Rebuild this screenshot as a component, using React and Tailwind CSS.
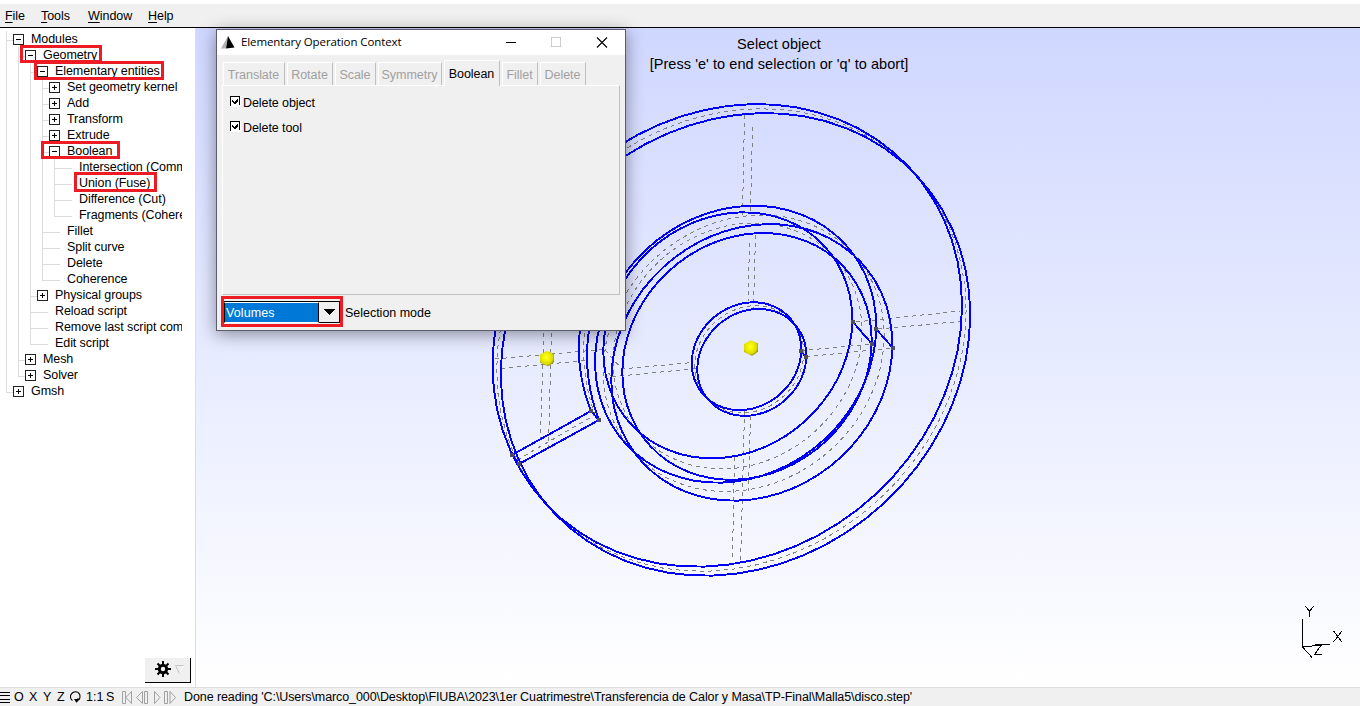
import React from "react";

const ROWS = [
  { t: "Modules", k: 0, s: "-" },
  { t: "Geometry", k: 1, s: "-" },
  { t: "Elementary entities", k: 2, s: "-" },
  { t: "Set geometry kernel", k: 3, s: "+" },
  { t: "Add", k: 3, s: "+" },
  { t: "Transform", k: 3, s: "+" },
  { t: "Extrude", k: 3, s: "+" },
  { t: "Boolean", k: 3, s: "-" },
  { t: "Intersection (Common)", k: 4 },
  { t: "Union (Fuse)", k: 4 },
  { t: "Difference (Cut)", k: 4 },
  { t: "Fragments (Coherence)", k: 4, last: true },
  { t: "Fillet", k: 3 },
  { t: "Split curve", k: 3 },
  { t: "Delete", k: 3 },
  { t: "Coherence", k: 3, last: true },
  { t: "Physical groups", k: 2, s: "+" },
  { t: "Reload script", k: 2 },
  { t: "Remove last script command", k: 2 },
  { t: "Edit script", k: 2, last: true },
  { t: "Mesh", k: 1, s: "+" },
  { t: "Solver", k: 1, s: "+", last: true },
  { t: "Gmsh", k: 0, s: "+", last: true },
];

function TreeRow({ row }) {
  return (
    <div className="flex h-4 shrink-0">
      {Array.from({ length: row.k }, (_, i) => (
        <div key={i} className="w-3 shrink-0 pl-[6px]">
          <div className="h-4 border-l border-[#dcdcdc]" />
        </div>
      ))}
      <div className="shrink-0 pl-[6px]">
        <div
          className={
            (row.s ? "w-[7px]" : "w-[18px]") + " h-[10px] border-b border-l border-[#dcdcdc]"
          }
        />
        {!row.last && <div className="h-[6px] border-l border-[#dcdcdc]" />}
      </div>
      {row.s && (
        <svg className="mt-[3px] h-[11px] w-[11px] shrink-0" viewBox="0 0 11 11" shapeRendering="crispEdges">
          <rect x="0.5" y="0.5" width="10" height="10" fill="#fff" stroke="#222" />
          <path d={row.s === "+" ? "M3 5.5H8M5.5 3V8" : "M3 5.5H8"} stroke="#000" fill="none" />
        </svg>
      )}
      <span className="ml-[7px] whitespace-nowrap text-[12.5px] leading-4 tracking-[-0.08px]">{row.t}</span>
    </div>
  );
}

const MARK = "absolute border-[3px] border-[#ed1c24]";

function ring(cx, cy, a, b) {
  const rho = -0.129;
  const q = Math.sqrt(1 - rho * rho);
  let d = "";
  const n = 64;
  for (let i = 0; i < n; i++) {
    const t = (2 * Math.PI * i) / n;
    const x = cx + a * Math.cos(t);
    const y = cy + b * (rho * Math.cos(t) + q * Math.sin(t));
    d += (i ? "L" : "M") + x.toFixed(1) + " " + y.toFixed(1);
  }
  return d + "Z";
}

const SOLID = [
  [727.3, 335.4, 234.7, 231.3],
  [735.5, 344.4, 234.7, 231.3],
  [727.8, 335.3, 124.5, 123],
  [747, 356.4, 124.7, 123.4],
  [735.6, 344.2, 140.6, 138.5],
  [751.8, 362.4, 140.5, 138.3],
  [746.5, 356.2, 54.8, 53.9],
  [751.8, 362.4, 54.5, 53.4],
];
const DASHED = [
  [731.4, 340, 234.7, 231.3],
  [737.5, 346, 124.5, 123],
  [743.7, 353.3, 140.5, 138.3],
  [749.2, 359.3, 54.6, 53.6],
];
const AXES =
  "M744.5 115L742.5 215M752.5 127L750.5 211M755.5 235L753.5 310M749.5 243L748 302" +
  "M856 322L960 311M878 329L965 321M801 350.7L872 344M806 356.7L893 348" +
  "M744.5 411L742.5 490M750.5 416L748.5 491M734.5 457L732.5 557M742.5 492L740.5 564" +
  "M495 359L602 349.5M501 368.5L585 360.5M621 369L693 362.5M612 376.7L697 368.5" +
  "M544 325L540.5 438M551.5 325L548.5 447M517 460L595 415M605 350L621.5 368.5M603 367L612 377" +
  "M585 325Q580 375 595 415";
const NODES = [
  [591, 411], [599, 420], [512, 455], [519, 464], [853, 322],
  [872, 344], [876, 329], [893, 348], [801, 351], [806, 357],
];

function Sphere({ x, y }) {
  return (
    <path
      transform={`translate(${x} ${y})`}
      d="M-1 -7.5L3 -6.5L7 -4.5L7 3.5L4 6L1 7.8L-3 6L-7 4L-7 -4L-4 -5.5Z"
      fill="url(#ball)"
    />
  );
}

function Scene() {
  return (
    <svg className="block h-[659px] w-[1164px]" viewBox="196 28 1164 659">
      <defs>
        <radialGradient id="ball" cx="0.45" cy="0.4" r="0.62">
          <stop offset="0" stopColor="#ffff30" />
          <stop offset="0.35" stopColor="#f4f400" />
          <stop offset="0.75" stopColor="#d8d800" />
          <stop offset="1" stopColor="#858500" />
        </radialGradient>
      </defs>
      <g fill="none" shapeRendering="crispEdges">
        <g stroke="#808080" strokeWidth="1" strokeDasharray="4 4">
          {DASHED.map((r, i) => (
            <path key={i} d={ring(...r)} />
          ))}
          <path d={AXES} />
        </g>
        <g stroke="#0000f4" strokeWidth="1.95">
          {SOLID.map((r, i) => (
            <path key={i} d={ring(...r)} />
          ))}
          <path d="M581 325Q577 345 580 368Q583 391 591 411L599 420Q591 400 588 375Q585 350 590 325" />
          <path d="M512 455L591 411M519 464L599 420M512 455L519 464" />
          <path d="M853 322L872 344M876 329L893 348M801 351L806 357" />
        </g>
        {NODES.map(([x, y], i) => (
          <rect key={i} x={x - 2} y={y - 2} width="4" height="4" fill="#4d4d5c" />
        ))}
        <path
          d="M1302.5 619V647M1302 646.5H1312M1312 645.5H1318M1315 644.5H1330M1302.5 647L1312 657.500M1305 606L1309.500 611L1314 606M1309.500 611V617M1333.500 631L1342 642M1342 631L1333.500 642M1313.500 645.500H1321L1314.500 654.500H1322"
          stroke="#000"
          strokeWidth="1"
        />
      </g>
      <Sphere x={547} y={358.5} />
      <Sphere x={751} y={348} />
    </svg>
  );
}

const TABS = [
  ["Translate", "w-[62px]"],
  ["Rotate", "w-[46px]"],
  ["Scale", "w-[41px]"],
  ["Symmetry", "w-[64px]"],
  ["Boolean", "w-[56px]"],
  ["Fillet", "w-[36px]"],
  ["Delete", "w-[46px]"],
];

function Check({ label }) {
  return (
    <div className="flex h-[25px] items-center">
      <svg className="-mt-[2px] h-[11px] w-[11px]" viewBox="0 0 11 11" shapeRendering="crispEdges">
        <rect width="11" height="11" fill="#fff" />
        <path d="M0.500 10V0.500H9.500V9" fill="none" stroke="#000" />
        <path d="M2 3.500L4.500 6L8 2.500V5L4.500 8.500L2 6Z" fill="#000" />
      </svg>
      <span className="ml-[2px] mt-[2px] text-[12.5px] tracking-[-0.08px]">{label}</span>
    </div>
  );
}

function Dialog() {
  return (
    <div className="absolute left-[216px] top-[29px] flex h-[302px] w-[410px] flex-col border border-[#5b5c6e] bg-[#f0f0f0] shadow-[0_3px_16px_rgba(0,0,0,0.42)]">
      <div className="flex h-[25px] shrink-0 items-center bg-white">
        <svg className="ml-[4px] h-[15px] w-[15px]" viewBox="0 0 15 15">
          <path d="M7 1L0 13.500H5Z" fill="#b4b4b4" />
          <path d="M7 1L5 13.500L13.500 12.500Z" fill="#000" />
        </svg>
        <span className="-mt-px ml-[5px] whitespace-nowrap font-['Open_Sans',sans-serif] text-[11.5px] tracking-[-0.1px]">
          Elementary Operation Context
        </span>
        <svg className="ml-auto mr-[16px] h-[11px] w-[103px]" viewBox="0 0 103 11">
          <g fill="none" shapeRendering="crispEdges">
            <path d="M0 5.500H10" stroke="#000" />
            <rect x="45.500" y="0.500" width="9" height="9" stroke="#ccc" />
          </g>
          <path d="M91 0.500L101 10.500M101 0.500L91 10.500" stroke="#000" strokeWidth="1.100" />
        </svg>
      </div>
      <div className="ml-[6px] mt-[5px] flex h-[25px] shrink-0 items-end gap-[2px]">
        {TABS.map(([t, w]) => {
          const active = t === "Boolean";
          return (
            <div
              key={t}
              className={
                w +
                " flex shrink-0 items-center justify-center border-l border-r border-t border-l-white border-r-[#c0c0c0] border-t-white pr-px pt-[2px] text-[12.5px] tracking-[-0.04px] " +
                (active ? "relative z-10 -mb-px h-[26px] bg-[#f0f0f0] text-black" : "h-[23px] text-[#a0a0a0]")
              }
            >
              {t}
            </div>
          );
        })}
      </div>
      <div className="ml-[5px] h-[210px] w-[398px] shrink-0 border border-b-[#c0c0c0] border-l-white border-r-[#c0c0c0] border-t-white pl-[7px] pt-[4px]">
        <Check label="Delete object" />
        <Check label="Delete tool" />
      </div>
      <div className="ml-[4px] mt-[1px] flex items-center">
        <div className="h-[31px] w-[122px] border-[3px] border-[#ed1c24] pt-[2px]">
          <div className="flex h-[22px] border-t border-black">
            <div className="flex w-[95px] items-center border border-l-black border-r-black border-t-white border-b-white bg-[#0078d7] bg-clip-padding pl-[1px] pt-px text-[12.5px] tracking-[0.1px] text-white">
              Volumes
            </div>
            <div className="flex grow items-center justify-center border-b border-r border-black">
              <svg className="h-[6px] w-[12px]" viewBox="0 0 12 6" shapeRendering="crispEdges">
                <path d="M0 0H12L6 6Z" fill="#000" />
              </svg>
            </div>
          </div>
        </div>
        <span className="ml-[2px] mt-[4px] text-[12.5px] tracking-[-0.02px]">Selection mode</span>
      </div>
    </div>
  );
}

function Accel({ t }) {
  return (
    <span>
      <span className="underline underline-offset-2">{t[0]}</span>
      {t.slice(1)}
    </span>
  );
}

export default function App() {
  return (
    <div className="relative flex h-[706px] w-[1360px] flex-col overflow-hidden bg-white font-['Liberation_Sans',Arial,sans-serif] text-black">
      <div className="flex h-[28px] shrink-0 border-t-4 border-b border-b-black border-t-white bg-[#f0f0f0] pl-[5px] text-[12.5px] leading-[24px] tracking-[-0.05px]">
        <div className="w-[36px]"><Accel t="File" /></div>
        <div className="w-[47px]"><Accel t="Tools" /></div>
        <div className="w-[60px]"><Accel t="Window" /></div>
        <div><Accel t="Help" /></div>
      </div>
      <div className="flex h-[659px] shrink-0">
        <div className="flex w-[196px] shrink-0 flex-col border-r border-[#dedede] bg-white">
          <div className="flex w-[182px] flex-col overflow-hidden pt-[3px]">
            {ROWS.map((r) => (
              <TreeRow key={r.t + r.k} row={r} />
            ))}
          </div>
          <div className="mb-[4px] ml-[145px] mt-auto flex h-[25px] w-[46px] items-center border-b border-r border-black bg-[#f0f0f0] pl-[10px]">
            <svg className="-mt-[2px] h-[16px] w-[16px]" viewBox="0 0 16 16">
              <path d="M8 0V16M0 8H16M2.500 2.500L13.500 13.500M13.500 2.500L2.500 13.500" stroke="#000" strokeWidth="2" />
              <circle cx="8" cy="8" r="3.700" fill="#f0f0f0" stroke="#000" strokeWidth="3" />
            </svg>
            <svg className="-mt-[2px] ml-[4px] h-[9px] w-[9px]" viewBox="0 0 9 9">
              <path d="M8.500 0.500L4.500 8.500" stroke="#fff" />
              <path d="M8.500 0.500H0.500L4.500 8.500" fill="none" stroke="#c4c4c4" />
            </svg>
          </div>
        </div>
        <div className="relative w-[1164px] bg-linear-to-b from-[#d0d7ff] to-white">
          <Scene />
          <div className="absolute left-[430px] top-[6px] w-[306px] whitespace-nowrap text-center text-[14.5px] leading-5 tracking-[0.06px]">
            <div>Select object</div>
            <div>[Press &apos;e&apos; to end selection or &apos;q&apos; to abort]</div>
          </div>
        </div>
      </div>
      <div className="flex h-[19px] shrink-0 items-center border-t border-[#dedede] bg-[#f0f0f0] pt-px text-[12.5px]">
        <svg className="-mt-px h-[11px] w-[10px]" viewBox="0 0 10 11" shapeRendering="crispEdges">
          <path d="M0 0.500H10M0 3.500H10M0 7.500H10M0 10.500H10" stroke="#000" />
        </svg>
        <span className="ml-[4px] w-[15px]">O</span>
        <span className="w-[14px]">X</span>
        <span className="w-[14px]">Y</span>
        <span className="w-[13px]">Z</span>
        <svg className="-mt-px h-[12px] w-[11px]" viewBox="0 0 11 12">
          <path d="M2.500 9.500C0.500 8.500 0 5.500 1 3.500Q2.500 0.700 5.500 0.700Q8.500 0.700 9.700 3.500Q10.300 6 9.500 8H7" fill="none" stroke="#000" strokeWidth="1.100" />
          <path d="M4 8H10L6.500 11.800Z" fill="#000" />
        </svg>
        <span className="ml-[5px] w-[20px]">1:1</span>
        <span className="w-[16px]">S</span>
        <svg className="-mt-px h-[13px] w-[56px]" viewBox="0 0 56 13" fill="none" stroke="#a0a0a0">
          <path d="M0.500 0.500H3.500V12.500H0.500ZM9.500 0.500V12.500L4 6.500Z" />
          <path d="M20.500 0.500V12.500L14.500 6.500ZM22.500 0.500H25.500V12.500H22.500Z" />
          <path d="M32.500 0.500L38 6.500L32.500 12.500Z" />
          <path d="M42.500 0.500H45.500V12.500H42.500ZM48 0.500L53.500 6.500L48 12.500Z" />
        </svg>
        <span className="ml-[6px] whitespace-nowrap tracking-[-0.095px]">
          {"Done reading 'C:\\Users\\marco_000\\Desktop\\FIUBA\\2023\\1er Cuatrimestre\\Transferencia de Calor y Masa\\TP-Final\\Malla5\\disco.step'"}
        </span>
      </div>
      <div className={MARK + " left-[20px] top-[45px] h-[18px] w-[82px]"} />
      <div className={MARK + " left-[34px] top-[61px] h-[19px] w-[130px]"} />
      <div className={MARK + " left-[41px] top-[141px] h-[18px] w-[79px]"} />
      <div className={MARK + " left-[74px] top-[172px] h-[20px] w-[83px]"} />
      <Dialog />
    </div>
  );
}
